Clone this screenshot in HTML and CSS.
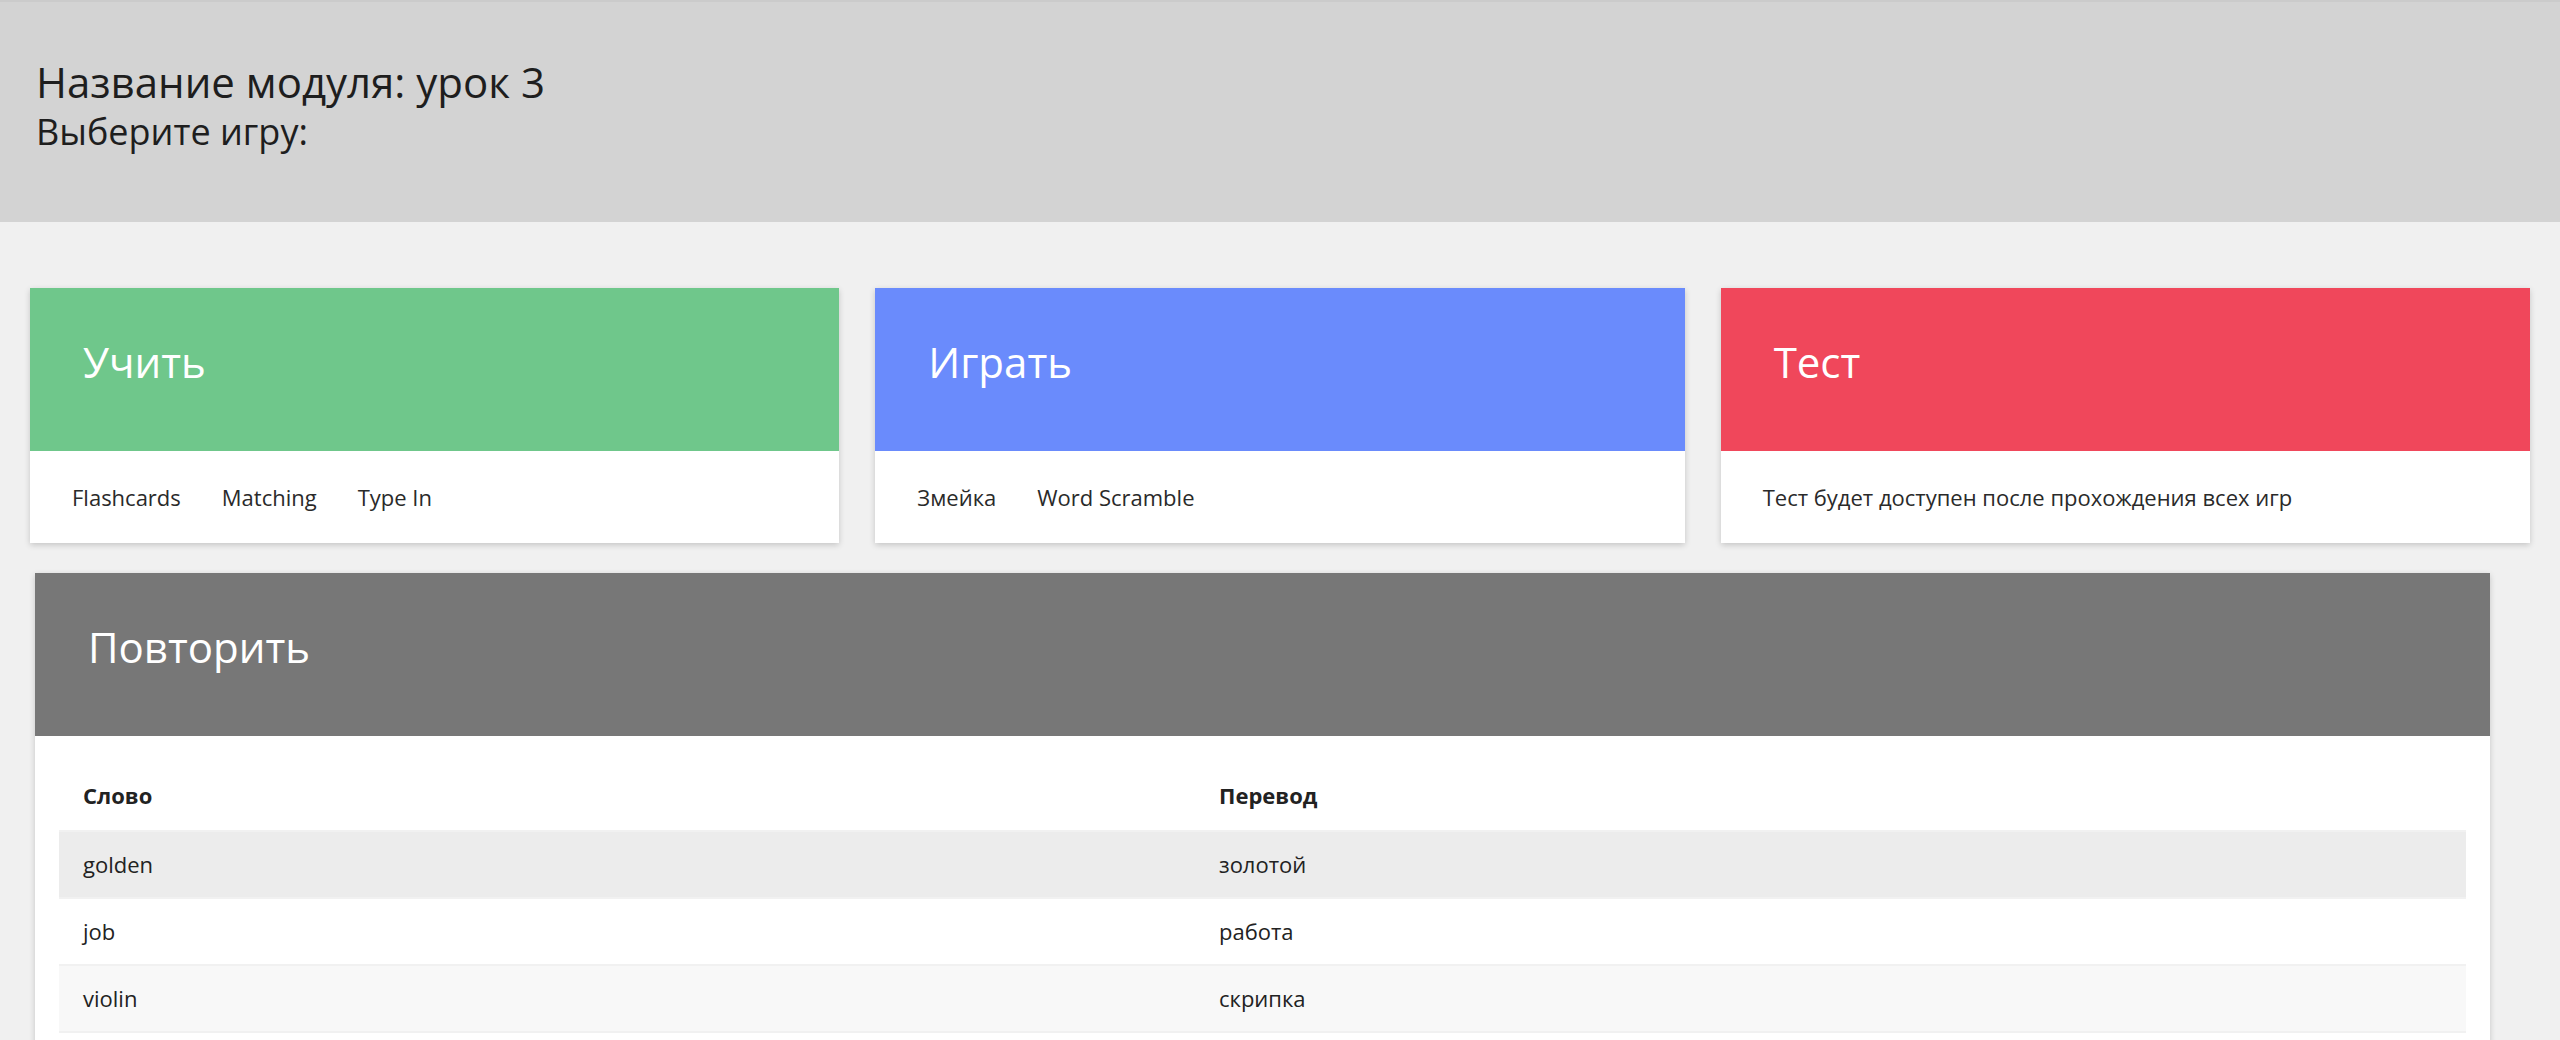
FILE: index.html
```html
<!DOCTYPE html>
<html lang="ru">
<head>
<meta charset="utf-8">
<title>Модуль</title>
<link rel="stylesheet" href="styles.css">
</head>
<body>
<header class="top">
  <h1 class="top-title">Название модуля: урок 3</h1>
  <h2 class="top-sub">Выберите игру:</h2>
</header>
<main>
  <div class="cards">
    <div class="card">
      <div class="card-head green">Учить</div>
      <div class="card-body">
        <a class="link">Flashcards</a>
        <a class="link">Matching</a>
        <a class="link">Type In</a>
      </div>
    </div>
    <div class="card">
      <div class="card-head blue">Играть</div>
      <div class="card-body">
        <a class="link">Змейка</a>
        <a class="link">Word Scramble</a>
      </div>
    </div>
    <div class="card">
      <div class="card-head red">Тест</div>
      <div class="card-body">
        <span class="note">Тест будет доступен после прохождения всех игр</span>
      </div>
    </div>
  </div>
  <section class="review">
    <div class="card-head gray">Повторить</div>
    <div class="review-body">
      <div class="words" role="table">
        <div class="row head" role="row"><div class="cell" role="columnheader">Слово</div><div class="cell" role="columnheader">Перевод</div></div>
        <div class="row r1" role="row"><div class="cell" role="cell">golden</div><div class="cell" role="cell">золотой</div></div>
        <div class="row r2" role="row"><div class="cell" role="cell">job</div><div class="cell" role="cell">работа</div></div>
        <div class="row r3" role="row"><div class="cell" role="cell">violin</div><div class="cell" role="cell">скрипка</div></div>
      </div>
    </div>
  </section>
</main>
</body>
</html>
```
FILE: styles.css
```css
html, body {
  margin: 0;
  padding: 0;
}
body {
  background: #f0f0f0;
  font-family: "Open Sans", "Noto Sans", sans-serif;
  color: #222;
  overflow: hidden;
}
.top {
  background: #d3d3d3;
  border-top: 2px solid #cbcbcb;
  box-sizing: border-box;
  height: 222px;
  padding: 52px 36px 0;
}
.top-title {
  margin: 0;
  font-size: 42px;
  line-height: 56px;
  font-weight: 400;
  color: #1e1e1e;
}
.top-sub {
  margin: 0;
  font-size: 36px;
  line-height: 44px;
  font-weight: 400;
  color: #1e1e1e;
}
.cards {
  display: grid;
  grid-template-columns: repeat(3, 1fr);
  gap: 36px;
  padding: 66px 30px 0;
}
.card {
  background: #fff;
  box-shadow: 0 2px 6px rgba(0, 0, 0, 0.18);
}
.card-head {
  box-sizing: border-box;
  height: 163px;
  padding: 46px 53px 0;
  font-size: 42px;
  line-height: 56px;
  font-weight: 400;
  color: #fff;
}
.green { background: #6fc78b; }
.blue { background: #6a8bfc; }
.red { background: #f0475b; }
.gray { background: #777777; }
.card-body {
  display: flex;
  gap: 41px;
  padding: 31px 42px;
  font-size: 22px;
  line-height: 30px;
  color: #2a2a2a;
}
.link {
  color: #2a2a2a;
  text-decoration: none;
}
.note {
  color: #2a2a2a;
}
.review {
  margin: 30px 70px 0 35px;
  background: #fff;
  box-shadow: 0 2px 6px rgba(0, 0, 0, 0.18);
}
.review-body {
  padding: 25px 24px 40px;
}
.words {
  font-size: 22px;
  line-height: 33px;
  color: #222;
}
.row {
  display: grid;
  grid-template-columns: 1136px 1fr;
}
.cell {
  padding: 16px 24px;
}
.head .cell {
  font-weight: 700;
  padding: 18px 24px;
}
.r1, .r2, .r3 {
  border-top: 2px solid #f1f1f1;
}
.r1 { background: #ececec; }
.r2 { background: #fff; }
.r3 { background: #f8f8f8; border-bottom: 2px solid #f1f1f1; }
```
